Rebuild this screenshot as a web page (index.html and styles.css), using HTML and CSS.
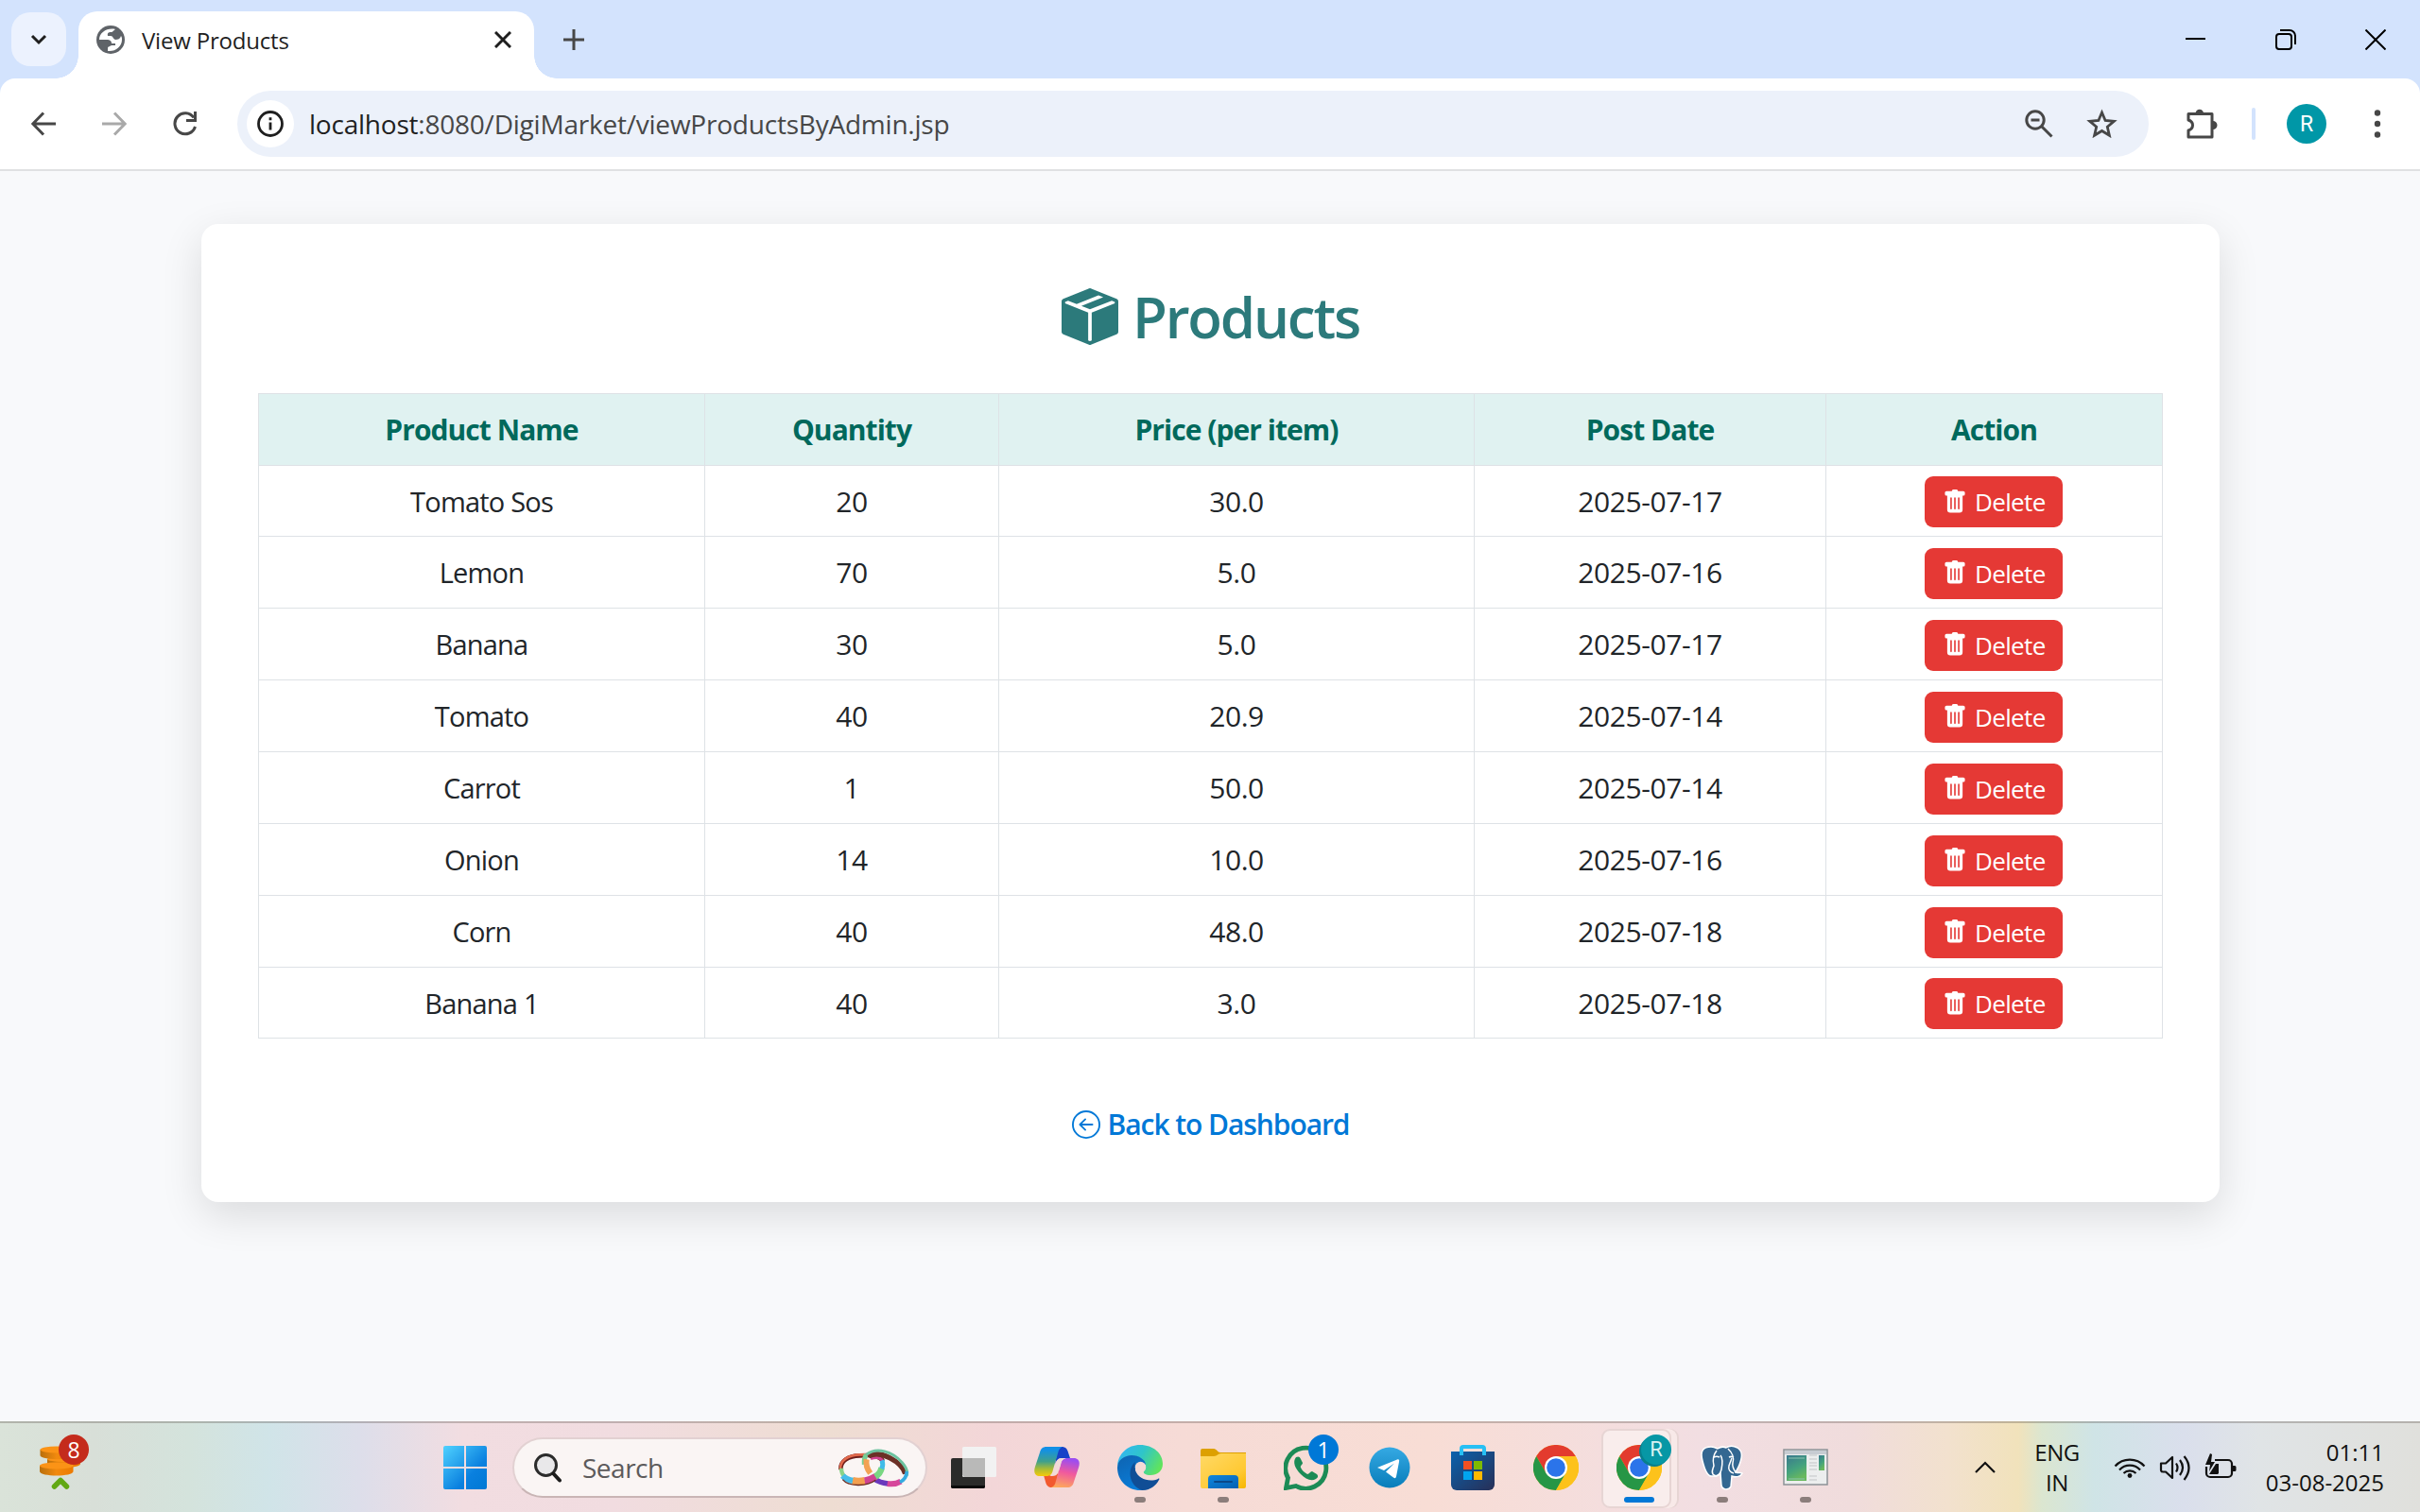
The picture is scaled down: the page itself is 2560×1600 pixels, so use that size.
FILE: index.html
```html
<!DOCTYPE html>
<html lang="en">
<head>
<meta charset="utf-8">
<title>View Products</title>
<link rel="stylesheet" href="styles.css">
</head>
<body>
<svg class="sprite" aria-hidden="true">
  <symbol id="trash" viewBox="0 0 16 16"><path d="M2.500 1a1 1 0 0 0-1 1v1a1 1 0 0 0 1 1H3v9a2 2 0 0 0 2 2h6a2 2 0 0 0 2-2V4h.5a1 1 0 0 0 1-1V2a1 1 0 0 0-1-1H10a1 1 0 0 0-1-1H7a1 1 0 0 0-1 1zm3 4a.5.5 0 0 1 .5.5v7a.5.5 0 0 1-1 0v-7a.5.5 0 0 1 .5-.5M8 5a.5.5 0 0 1 .5.5v7a.5.5 0 0 1-1 0v-7A.5.5 0 0 1 8 5m3 .5v7a.5.5 0 0 1-1 0v-7a.5.5 0 0 1 1 0"/></symbol>
  <symbol id="chrome" viewBox="0 0 48 48">
    <circle cx="24" cy="24" r="24" fill="#fdc21b"/>
    <path d="M3.200 12A24 24 0 0 1 44.800 12H24L13.600 30z" fill="#e33b2e"/>
    <path d="M3.200 12A24 24 0 0 0 24 48L34.400 30 24 36 13.600 30z" fill="#269646"/>
    <path d="M44.800 12A24 24 0 0 1 24 48L34.400 30 36 24 24 12z" fill="#fdc21b"/>
    <circle cx="24" cy="24" r="12" fill="#fff"/><circle cx="24" cy="24" r="9.800" fill="#2b74ea"/>
  </symbol>
</svg>

<header class="tabstrip">
  <div class="tab-search"><svg width="18" height="12" viewBox="0 0 18 12"><path d="M2 2l7 7 7-7" fill="none" stroke="#1f1f1f" stroke-width="3"/></svg></div>
  <div class="tab">
    <svg class="favicon" width="30" height="30" viewBox="0 0 30 30"><circle cx="15" cy="15" r="15" fill="#5f6368"/><path d="M20 4C12 2 3 7 3 15h8c3 0 5 1 5 4h4v2h-4c-1 1-4 1-4 3v3c8 1 15-5 15-12 0-1 0-3-1-4-1 3-3 4-6 4-3-1-2-4-5-4h-3c-1-4 2-4 4-4 1 0 2-2 4-3z" fill="#fff"/></svg>
    <span class="tab-title">View Products</span>
    <svg width="18" height="18" viewBox="0 0 18 18"><path d="M1 1l16 16M17 1L1 17" stroke="#1f1f1f" stroke-width="3"/></svg>
  </div>
  <svg class="new-tab" width="22" height="22" viewBox="0 0 22 22"><path d="M11 0v22M0 11h22" stroke="#474747" stroke-width="3"/></svg>
  <div class="window-buttons">
    <svg width="22" height="22" viewBox="0 0 22 22"><path d="M0 10h21" stroke="#000" stroke-width="2"/></svg>
    <svg width="22" height="22" viewBox="0 0 22 22" fill="none" stroke="#000" stroke-width="2"><rect x="1" y="5" width="16" height="16" rx="3"/><path d="M5 1h10a6 6 0 0 1 6 6v9"/></svg>
    <svg width="22" height="22" viewBox="0 0 22 22"><path d="M.5.5l21 21M21.500.5l-21 21" stroke="#000" stroke-width="2"/></svg>
  </div>
</header>

<nav class="toolbar">
  <svg class="nav-back" width="26" height="26" viewBox="0 0 26 26" fill="none" stroke="#474747" stroke-width="3"><path d="M26 13H2M13 1.500L1.800 13 13 24.500"/></svg>
  <svg class="nav-forward" width="26" height="26" viewBox="0 0 26 26" fill="none" stroke="#a9a9a9" stroke-width="3"><path d="M0 13h24M13 1.500L24.200 13 13 24.500"/></svg>
  <svg class="nav-reload" width="26" height="26" viewBox="0 0 26 26" fill="none" stroke="#474747" stroke-width="3"><path d="M22 6.500A11 11 0 1 0 23.500 16M23.500 0v9.500H14"/></svg>
  <div class="omnibox">
    <div class="site-info"><svg width="28" height="28" viewBox="0 0 28 28"><circle cx="14" cy="14" r="12.500" fill="none" stroke="#1f1f1f" stroke-width="2.800"/><path d="M14 12.500v8M14 7.300v2.900" stroke="#1f1f1f" stroke-width="2.800"/></svg></div>
    <span class="url"><span class="host">localhost</span>:8080/DigiMarket/viewProductsByAdmin.jsp</span>
    <svg class="zoom-icon" width="30" height="30" viewBox="0 0 30 30" fill="none" stroke="#474747" stroke-width="3"><circle cx="11" cy="11" r="9.200"/><path d="M17.500 17.500L28.500 28.500M6.500 11h9"/></svg>
    <svg class="star-icon" width="33" height="31" viewBox="0 0 33 31"><path d="M16.500 4l3.600 8.500 9.200.8-7 6 2.100 9-7.900-4.800-7.900 4.800 2.100-9-7-6 9.200-.8z" fill="none" stroke="#474747" stroke-width="2.800"/></svg>
  </div>
  <svg class="extensions" width="36" height="34" viewBox="0 0 36 34"><path d="M3 6.500h25v24.500H3V24c6-2 6-9 0-11z" fill="none" stroke="#474747" stroke-width="3" stroke-linejoin="round"/><path d="M10.500 6a4.300 4.300 0 0 1 8.600 0zM29 14a4.500 4.500 0 0 1 0 9z" fill="#474747"/></svg>
  <div class="divider"></div>
  <div class="avatar">R</div>
  <svg class="menu-dots" width="8" height="32" viewBox="0 0 8 32" fill="#474747"><circle cx="4" cy="4.500" r="3.200"/><circle cx="4" cy="16" r="3.200"/><circle cx="4" cy="27.500" r="3.200"/></svg>
</nav>

<main class="page">
  <section class="card">
    <h1 class="heading">
      <svg width="60" height="60" viewBox="0 0 16 16" fill="currentColor"><path d="M15.528 2.973a.75.75 0 0 1 .472.696v8.662a.75.75 0 0 1-.472.696l-7.250 2.900a.75.75 0 0 1-.557 0l-7.250-2.900A.75.75 0 0 1 0 12.331V3.669a.75.75 0 0 1 .471-.696L7.443.184l.01-.003.268-.108a.75.75 0 0 1 .558 0l.269.108.01.003zM10.404 2 4.250 4.461 1.846 3.500 1 3.839v.4l6.500 2.600v7.922l.5.2.5-.2V6.840l6.500-2.600v-.4l-.846-.339L8 5.961 5.596 5l6.154-2.461z"/></svg>
      <span>Products</span>
    </h1>
    <table class="products">
      <colgroup><col class="c-name"><col class="c-qty"><col class="c-price"><col class="c-date"><col class="c-action"></colgroup>
      <thead><tr><th>Product Name</th><th>Quantity</th><th>Price (per item)</th><th>Post Date</th><th>Action</th></tr></thead>
      <tbody>
        <tr class="short"><td>Tomato Sos</td><td class="num">20</td><td class="num">30.0</td><td class="num">2025-07-17</td><td><button class="delete"><svg><use href="#trash"/></svg><span>Delete</span></button></td></tr>
        <tr><td>Lemon</td><td class="num">70</td><td class="num">5.0</td><td class="num">2025-07-16</td><td><button class="delete"><svg><use href="#trash"/></svg><span>Delete</span></button></td></tr>
        <tr><td>Banana</td><td class="num">30</td><td class="num">5.0</td><td class="num">2025-07-17</td><td><button class="delete"><svg><use href="#trash"/></svg><span>Delete</span></button></td></tr>
        <tr><td>Tomato</td><td class="num">40</td><td class="num">20.9</td><td class="num">2025-07-14</td><td><button class="delete"><svg><use href="#trash"/></svg><span>Delete</span></button></td></tr>
        <tr><td>Carrot</td><td class="num">1</td><td class="num">50.0</td><td class="num">2025-07-14</td><td><button class="delete"><svg><use href="#trash"/></svg><span>Delete</span></button></td></tr>
        <tr><td>Onion</td><td class="num">14</td><td class="num">10.0</td><td class="num">2025-07-16</td><td><button class="delete"><svg><use href="#trash"/></svg><span>Delete</span></button></td></tr>
        <tr><td>Corn</td><td class="num">40</td><td class="num">48.0</td><td class="num">2025-07-18</td><td><button class="delete"><svg><use href="#trash"/></svg><span>Delete</span></button></td></tr>
        <tr class="short"><td>Banana 1</td><td class="num">40</td><td class="num">3.0</td><td class="num">2025-07-18</td><td><button class="delete"><svg><use href="#trash"/></svg><span>Delete</span></button></td></tr>
      </tbody>
    </table>
    <a class="back">
      <svg width="30" height="30" viewBox="0 0 16 16" fill="currentColor"><path fill-rule="evenodd" d="M1 8a7 7 0 1 0 14 0A7 7 0 0 0 1 8m15 0A8 8 0 1 1 0 8a8 8 0 0 1 16 0m-4.500-.5a.5.5 0 0 1 0 1H5.707l2.147 2.146a.5.5 0 0 1-.708.708l-3-3a.5.5 0 0 1 0-.708l3-3a.5.5 0 1 1 .708.708L5.707 7.500z"/></svg>
      <span>Back to Dashboard</span>
    </a>
  </section>
</main>

<footer class="taskbar">
  <div class="widget">
    <svg width="48" height="48" viewBox="0 0 48 48">
      <defs><linearGradient id="coin"><stop offset="0" stop-color="#b96f0c"/><stop offset=".5" stop-color="#f28a0e"/><stop offset="1" stop-color="#ec7a00"/></linearGradient></defs>
      <path d="M8 15v5c0 5.500 35 5.500 35 0v-5z" fill="url(#coin)"/><ellipse cx="25.500" cy="15" rx="17.500" ry="3" fill="#fb9316"/>
      <path d="M.5 5v6c0 5.500 35 5.500 35 0V5z" fill="url(#coin)"/><ellipse cx="18" cy="5" rx="17.500" ry="3.500" fill="#fb9316"/>
      <path d="M0 22v6c0 6 35.500 6 35.500 0v-6z" fill="url(#coin)"/><ellipse cx="17.800" cy="22" rx="17.800" ry="3.500" fill="#fb9316"/>
      <path d="M15.500 44l6.500-6.500 6.500 6.500" fill="none" stroke="#61a814" stroke-width="5.500" stroke-linecap="round" stroke-linejoin="round"/>
    </svg>
    <span class="badge badge-red">8</span>
  </div>
  <svg class="start" width="46" height="46" viewBox="0 0 46 46"><defs><linearGradient id="win" x1="0" y1="0" x2="46" y2="46" gradientUnits="userSpaceOnUse"><stop offset="0" stop-color="#50d2ff"/><stop offset=".65" stop-color="#0a80df"/><stop offset="1" stop-color="#0078d4"/></linearGradient></defs><path fill="url(#win)" d="M2 0h20v22H0V2a2 2 0 0 1 2-2zM24 0h20a2 2 0 0 1 2 2v20H24zM0 24h22v22H2a2 2 0 0 1-2-2zM24 24h22v20a2 2 0 0 1-2 2H24z"/></svg>
  <div class="search">
    <svg width="29" height="31" viewBox="0 0 29 31"><circle cx="12.500" cy="12.500" r="11" fill="#e9e8ea" stroke="#2b2b2b" stroke-width="3"/><path d="M20.500 21.500l6.500 7" stroke="#1c1c1c" stroke-width="4" stroke-linecap="round"/></svg>
    <span>Search</span>
    <svg class="rings" width="77" height="43" viewBox="50 45 231 129" fill="none">
      <path d="M60 114C58 88 85 70 120 70c30-2 62-4 74 18" stroke="#6e1f1c" stroke-width="14"/>
      <path d="M59 114C56 86 85 67 122 67h25" stroke="#e2694c" stroke-width="8"/>
      <path d="M155 80c18-6 34-4 38 8" stroke="#d04391" stroke-width="9"/>
      <path d="M148 72C185 50 255 90 265 128" stroke="#6b3026" stroke-width="16"/>
      <path d="M140 68C175 40 225 58 255 92 268 107 274 122 269 134" stroke="#6cc3a0" stroke-width="9"/>
      <path d="M167 144q16 12 43 15" stroke="#6a38bd" stroke-width="17"/>
      <path d="M208 159q24 4 43-7" stroke="#d6479b" stroke-width="18"/>
      <path d="M248 154q20-8 22-34" stroke="#35abe0" stroke-width="11"/>
      <path d="M141 68q-8 10-6 30" stroke="#76cf95" stroke-width="15"/>
      <path d="M142 82q-4 24 12 44" stroke="#f3a253" stroke-width="18"/>
      <path d="M62 110q0 18 12 28" stroke="#8bd389" stroke-width="13"/>
      <path d="M66 134q12 13 34 16" stroke="#46bdea" stroke-width="19"/>
      <path d="M98 150q18 4 39 0" stroke="#f4a04f" stroke-width="24"/>
      <path d="M136 150q18-3 36-14" stroke="#d04391" stroke-width="22"/>
      <path d="M170 137q16-10 20-28" stroke="#79d783" stroke-width="20"/>
      <path d="M190 112q6-14 1-27" stroke="#40bbe8" stroke-width="15"/>
      <path d="M66 146c18 22 75 24 105 2" stroke="#6b2c22" stroke-width="4"/>
    </svg>
  </div>
  <div class="apps">
    <div class="app"><svg width="48" height="48" viewBox="0 0 48 48"><rect y="14" width="36" height="32" rx="2" fill="#2b2b2a"/><path d="M0 43h36v1a2 2 0 0 1-2 2H2a2 2 0 0 1-2-2z" fill="#0a0a0a"/><rect x="12" y="2" width="36" height="32" rx="1.500" fill="#f2f2f2"/><path d="M12 14h24v20H14l-2-2z" fill="#b9b9b8"/></svg></div>
    <div class="app"><svg width="48" height="48" viewBox="0 0 48 48">
      <defs><linearGradient id="cpA" x1="0" y1="0" x2="0" y2="1"><stop offset=".1" stop-color="#1290e6"/><stop offset=".5" stop-color="#3fa08c"/><stop offset=".75" stop-color="#a8bb35"/><stop offset="1" stop-color="#f6ca0a"/></linearGradient><linearGradient id="cpB" x1=".4" y1="0" x2=".2" y2="1"><stop offset="0" stop-color="#9c4df0"/><stop offset=".45" stop-color="#f0599e"/><stop offset="1" stop-color="#feac58"/></linearGradient></defs>
      <path d="M25 2h4c4 0 6 2 7 6l2 6h-9c-4 0-6 3-7 7z" fill="#1642c8"/><path d="M23 45h-4c-4 0-6-2-7-6l-2-7h9c4 0 6-3 7-7z" fill="#f2592e"/>
      <path d="M13 2h17c-3 1-4 3-5 7l-5 17c-1 5-3 7-7 7H6c-5 0-7-4-5-10l5-15c1-4 3-6 7-6z" fill="url(#cpA)"/>
      <path d="M35 45H18c3-1 4-3 5-7l5-17c1-5 3-7 7-7h7c5 0 7 4 5 10l-5 15c-1 4-3 6-7 6z" fill="url(#cpB)"/>
      <path d="M29 14h6c-4 0-6 2-7 7l-3 9c-1 2-3 3-6 3h-3c3-1 4-4 5-7l2-7c1-3 3-5 6-5z" fill="#f2dad8"/>
    </svg></div>
    <div class="app running"><svg width="48" height="48" viewBox="0 0 48 48">
      <defs><linearGradient id="edA" x1="0" y1=".2" x2="1" y2=".6"><stop offset="0" stop-color="#33b5f4"/><stop offset=".5" stop-color="#2fc5c9"/><stop offset="1" stop-color="#61e45c"/></linearGradient><linearGradient id="edB" x1="0" y1="0" x2=".6" y2="1"><stop offset="0" stop-color="#0f63b0"/><stop offset="1" stop-color="#087fdc"/></linearGradient></defs>
      <path d="M0 22C1 9 11 0 24 0c14 0 24 9 24 20 0 8-6 12-13 12-5 0-8-2-7-4 2-2 2-4 2-5C29 12 5 8 0 22z" fill="url(#edA)"/>
      <path d="M0 24C0 16 8 11 15 11c8 0 15 5 15 10-9-5-15 7-8 15 4 6 12 8 20 3-4 6-10 9-18 9C11 48 0 38 0 24z" fill="url(#edB)"/>
      <path d="M19 18c-9 7-7 25 7 30 9 0 15-5 18-11 1-1 0-2-1-1-9 4-21 0-24-9-1-4-1-7 0-9z" fill="#104e96"/>
      <circle cx="24.500" cy="23.500" r="5.700" fill="#f5dad7"/>
    </svg></div>
    <div class="app running"><svg width="48" height="48" viewBox="0 0 48 48">
      <defs><linearGradient id="fold" x1="0" y1="0" x2="1" y2="1"><stop offset="0" stop-color="#ffd966"/><stop offset=".7" stop-color="#ffc933"/><stop offset="1" stop-color="#f6b600"/></linearGradient><linearGradient id="foldB" x1="0" y1="0" x2="1" y2="1"><stop offset="0" stop-color="#0f86df"/><stop offset="1" stop-color="#0660b0"/></linearGradient></defs>
      <path d="M0 6a2 2 0 0 1 2-2h12c3 0 4 4 7 4h27v10H0z" fill="#dda000"/><path d="M0 12h14c4 0 4-3 8-3h26v35a2 2 0 0 1-2 2H2a2 2 0 0 1-2-2z" fill="url(#fold)"/><path d="M8 46V36a4 4 0 0 1 4-4h24a4 4 0 0 1 4 4v10z" fill="url(#foldB)"/><path d="M15 39h18" stroke="#0c4888" stroke-width="2" stroke-linecap="round"/>
    </svg></div>
    <div class="app"><svg width="48" height="48" viewBox="0 0 48 48"><path d="M4.500 35A21.500 21.500 0 1 1 13 43.500L2.500 45.500z" fill="none" stroke="#1c8b56" stroke-width="4.800"/><path d="M13 13c2-1 4-1 5 2l2 4c0 2-3 3-2 5 1 3 4 5 7 7 2 0 3-3 5-3l5 3c2 2 1 4-1 5-5 3-11 0-16-5-6-6-9-13-5-18z" fill="#1c8b56"/></svg><span class="badge badge-blue">1</span></div>
    <div class="app"><svg width="48" height="48" viewBox="0 0 48 48"><defs><linearGradient id="tg" x1="0" y1="0" x2="0" y2="1"><stop offset="0" stop-color="#35a9e3"/><stop offset="1" stop-color="#087dba"/></linearGradient></defs><circle cx="24" cy="24" r="21.500" fill="url(#tg)"/><path d="M11 24L32 15.500c2-.5 2.500.5 2 2.500L31 33.500c-.5 2-1.500 2-3 1l-8-6 9-9-11 7.500z" fill="#fff"/></svg></div>
    <div class="app"><svg width="48" height="48" viewBox="0 0 48 48"><defs><linearGradient id="store" x1="0" y1="0" x2="1" y2="1"><stop offset="0" stop-color="#0a62ad"/><stop offset="1" stop-color="#282f56"/></linearGradient></defs><path d="M1 7h46v35a6 6 0 0 1-6 6H7a6 6 0 0 1-6-6z" fill="url(#store)"/><path d="M12 11V4a2 2 0 0 1 2-2h20a2 2 0 0 1 2 2v7" fill="none" stroke="#27c0f4" stroke-width="4"/><path d="M14 17h9v9h-9z" fill="#f25022"/><path d="M25 17h9v9h-9z" fill="#7fba00"/><path d="M14 28h9v9h-9z" fill="#00a4ef"/><path d="M25 28h9v9h-9z" fill="#ffb900"/></svg></div>
    <div class="app"><svg width="48" height="48"><use href="#chrome"/></svg></div>
    <div class="app active"><svg width="48" height="48"><use href="#chrome"/></svg><span class="badge badge-teal">R</span></div>
    <div class="app running"><svg width="48" height="48" viewBox="0 0 48 48"><path d="M3 17C0 6 4 2 12 2c3 0 5 1 7 2 3-2 7-2 9-1 3-2 8-2 12 0 6 4 5 10 2 18-1 3-3 6-4 8 3 1 6 0 7 1-1 3-6 5-11 3l-1 11c-2 4-9 4-10-1l-1-13c-3 4-7 3-9 3-5 1-8-8-10-16z" fill="#336791" stroke="#fff" stroke-width="1.500"/><path d="M18 6c-4 5-4 12-3 16-1 4-3 6-1 9 4 4 8 0 9-5 1-5 2-11-1-15M30 4c5 5 7 9 5 15-1 4 1 7 3 10M15 13c2-1 4-1 6 0M31 13c2-1 3-1 5 0M34 14l-3 8c-1 4 1 7 5 8" fill="none" stroke="#fff" stroke-width="1.500"/></svg></div>
    <div class="app running"><svg width="48" height="48" viewBox="0 0 48 48"><defs><linearGradient id="prog" x1="0" y1="0" x2=".4" y2="1"><stop offset="0" stop-color="#39778e"/><stop offset=".6" stop-color="#44a27e"/><stop offset="1" stop-color="#69b85e"/></linearGradient></defs><rect x="1" y="5" width="46" height="37" fill="#eceeee" stroke="#8c9297" stroke-width="1.500"/><path d="M2 6h44v4H2z" fill="#c7ccd2"/><rect x="4" y="11" width="21" height="27" fill="url(#prog)"/><path d="M6 14h17M6 36h17" stroke="#8cc5b1"/><path d="M28 11h8M28 15h8M28 19h8M28 22h8M28 26h8M28 33h8M28 37h8" stroke="#c2c5c7"/><rect x="38" y="11" width="6" height="16" fill="url(#prog)"/></svg></div>
  </div>
  <div class="tray">
    <svg class="tray-up" width="24" height="14" viewBox="0 0 24 14"><path d="M2 12L12 2l10 10" fill="none" stroke="#111" stroke-width="2.200"/></svg>
    <div class="lang"><span>ENG</span><span>IN</span></div>
    <svg class="wifi" width="34" height="24" viewBox="0 0 34 24" fill="none" stroke="#111" stroke-width="2.200"><path d="M1.500 10.500a21 21 0 0 1 31 0M6 14.500a15 15 0 0 1 22 0M10.500 18a9.500 9.500 0 0 1 13 0"/><circle cx="17" cy="20.500" r="2.400" fill="#111" stroke="none"/></svg>
    <svg class="sound" width="34" height="28" viewBox="0 0 34 28" fill="none" stroke="#111" stroke-width="2.200"><path d="M2 9.500h5L14 3v22l-7-6.500H4a2 2 0 0 1-2-2z" stroke-linejoin="round"/><path d="M18 9.500q3 4.500 0 9M22 6q6 8 0 16M26.500 2q10 12 0 25"/></svg>
    <svg class="battery" width="34" height="28" viewBox="0 0 34 28"><path d="M11 8h14a4 4 0 0 1 4 4v10a4 4 0 0 1-4 4H6a4 4 0 0 1-4-4v-7" fill="none" stroke="#111" stroke-width="2.200"/><path d="M30 14h2a1.500 1.500 0 0 1 1.500 1.500v3A1.500 1.500 0 0 1 32 20h-2zM6 1v0L1 13h5l-1 7 6-10H7l1-8zM5 23l7-11h3v10l-1 1z" fill="#111"/></svg>
    <div class="clock"><span class="time">01:11</span><span>03-08-2025</span></div>
  </div>
</footer>
</body>
</html>
```
FILE: styles.css
```css
* { box-sizing: border-box; }
body {
  margin: 0;
  width: 2560px;
  height: 1600px;
  overflow: hidden;
  display: flex;
  flex-direction: column;
  background: #f8f9fb;
  color: #212529;
  font-family: "Open Sans", "Noto Sans", sans-serif;
  font-size: 30px;
}
svg { display: block; flex: none; }
.sprite { position: absolute; width: 0; height: 0; }

/* Tab strip */
.tabstrip {
  height: 83px;
  flex: none;
  display: flex;
  align-items: center;
  padding: 0 36px 0 12px;
  background: #d3e3fd;
}
.tab-search {
  width: 58px;
  height: 57px;
  border-radius: 20px;
  background: #ecf2fe;
  display: grid;
  place-items: center;
}
.tab {
  position: relative;
  align-self: flex-end;
  width: 482px;
  height: 71px;
  margin-left: 13px;
  padding: 0 24px 12px 19px;
  border-radius: 20px 20px 0 0;
  background: #fff;
  display: flex;
  align-items: center;
}
.tab::before, .tab::after {
  content: "";
  position: absolute;
  bottom: 0;
  width: 24px;
  height: 24px;
}
.tab::before { left: -24px; background: radial-gradient(circle at 0 0, transparent 23.5px, #fff 24px); }
.tab::after { right: -24px; background: radial-gradient(circle at 100% 0, transparent 23.5px, #fff 24px); }
.tab-title {
  flex: 1;
  margin-left: 18px;
  padding-top: 2px;
  font-size: 24px;
  letter-spacing: -0.2px;
  color: #1f1f1f;
}
.new-tab { margin-left: 31px; }
.window-buttons { margin-left: auto; display: flex; gap: 73px; }

/* Toolbar */
.toolbar {
  position: relative;
  height: 98px;
  flex: none;
  display: flex;
  align-items: center;
  padding: 0 41px 0 33px;
  background: linear-gradient(#fff, #fff) padding-box;
  border-bottom: 2px solid #e0e1e3;
  border-radius: 16px 16px 0 0;
}
.toolbar::before {
  content: "";
  position: absolute;
  inset: 0;
  z-index: -1;
  background: #d3e3fd;
  height: 20px;
}
.nav-forward { margin-left: 49px; }
.nav-reload { margin-left: 49px; }
.omnibox {
  width: 2022px;
  height: 70px;
  margin-left: 42px;
  padding: 0 33px 0 10px;
  border-radius: 35px;
  background: #ecf1fa;
  display: flex;
  align-items: center;
}
.site-info {
  width: 50px;
  height: 50px;
  border-radius: 50%;
  background: #fff;
  display: grid;
  place-items: center;
}
.url {
  flex: 1;
  margin-left: 16px;
  font-size: 28px;
  letter-spacing: -0.22px;
  color: #474747;
}
.host { color: #1f1f1f; }
.star-icon { margin-left: 35px; margin-top: -2px; }
.extensions { margin-left: 39px; }
.divider { width: 4px; height: 34px; margin-left: 34px; border-radius: 2px; background: #d3e3fd; }
.avatar {
  width: 42px;
  height: 42px;
  margin-left: 33px;
  border-radius: 50%;
  background: #0097a7;
  color: #fff;
  font: 23px/43px Roboto, sans-serif;
  text-align: center;
}
.menu-dots { margin-left: auto; }

/* Page */
.page { height: 1323px; flex: none; padding: 56px 212px 0 213px; }
.card {
  height: 1035px;
  padding: 62px 60px 0;
  border-radius: 18px;
  background: #fff;
  box-shadow: 0 14px 44px rgba(0, 0, 0, 0.12);
}
.heading {
  height: 72px;
  margin: 0 0 45px;
  display: flex;
  align-items: center;
  justify-content: center;
  gap: 15px;
  color: #2c7a7b;
  font-size: 60px;
  font-weight: 600;
  line-height: 72px;
  letter-spacing: -2.2px;
}
.products {
  width: 2015px;
  table-layout: fixed;
  border-collapse: separate;
  border-spacing: 0;
  border: solid #dee2e6;
  border-width: 1px 0 0 1px;
  text-align: center;
}
.c-name { width: 472px; }
.c-qty { width: 311px; }
.c-price { width: 503px; }
.c-date { width: 372px; }
.c-action { width: 356px; }
.products th, .products td {
  height: 76px;
  padding: 1px 0 0;
  border: solid #dee2e6;
  border-width: 0 1px 1px 0;
  line-height: 44px;
  vertical-align: middle;
}
.products th { background: #e0f2f1; color: #00695c; font-weight: 700; letter-spacing: -0.95px; }
.products td { font-size: 29px; letter-spacing: -0.8px; }
.products .num { font-size: 30px; letter-spacing: -0.4px; }
.products .short td { height: 75px; }
.delete {
  width: 146px;
  height: 54px;
  margin: 1px 0 0 104px;
  padding: 0 0 0 21px;
  border: 0;
  border-radius: 9px;
  background: #e53935;
  color: #fff;
  display: flex;
  align-items: center;
  font: 26px/36px "Open Sans", sans-serif;
  letter-spacing: -0.65px;
}
.delete svg { width: 26px; height: 26px; margin: -1px 8px 0 -2px; fill: currentColor; }
.back {
  margin-top: 68px;
  display: flex;
  align-items: center;
  justify-content: center;
  gap: 8px;
  height: 45px;
  color: #0078d7;
  font-weight: 600;
  line-height: 45px;
  letter-spacing: -1.07px;
}

/* Taskbar */
.taskbar {
  height: 96px;
  flex: none;
  display: flex;
  align-items: center;
  border-top: 2px solid rgba(90, 80, 75, 0.32);
  background: linear-gradient(90deg, #dae3d9 0, #d8dfd8 100px, #d4e3dc 200px, #d0e4e8 285px, #dddeea 380px, #f2dde1 490px, #f1dce0 650px, #eeddd2 880px, #f3d6d8 1050px, #f6dbd6 1250px, #f8ddd5 1510px, #f2dee2 1800px, #f0dcdc 1960px, #f2e1ce 2060px, #f1e2bb 2135px, #dbe6d0 2160px, #cfe4e6 2215px, #dadfec 2310px, #e0e4e6 2390px, #e0e0dc 2560px) border-box;
}
.widget { position: relative; width: 48px; margin-left: 42px; }
.badge {
  position: absolute;
  width: 32px;
  height: 32px;
  border-radius: 50%;
  color: #fff;
  font-size: 23px;
  line-height: 32px;
  text-align: center;
}
.badge-red { left: 20px; top: -11px; background: #c42b1c; }
.badge-blue { left: 46px; top: 12px; background: #0078d7; }
.badge-teal { left: 46px; top: 12px; background: #0797a5; color: #d9f1f2; font: 22px/32px Roboto, sans-serif; box-shadow: -2px 2px 0 #087f8c; }
.start { margin-left: 379px; }
.search {
  width: 439px;
  height: 64px;
  margin-left: 27px;
  padding: 0 16px 0 21px;
  border: 2px solid #e2d1d2;
  border-bottom-color: #c9b5b5;
  border-radius: 32px;
  background: #faf5f4;
  display: flex;
  align-items: center;
}
.search span { flex: 1; margin-left: 22px; font-size: 28px; letter-spacing: -0.5px; color: #5c5a5b; }
.apps { display: flex; margin-left: 5px; }
.app {
  position: relative;
  width: 88px;
  height: 94px;
  display: grid;
  place-items: center;
}
.app svg { position: relative; }
.app.running::after, .app.active::after {
  content: "";
  position: absolute;
  left: 38px;
  bottom: 10px;
  width: 12px;
  height: 6px;
  border-radius: 3px;
  background: #8b7d7b;
}
.app.active::after { left: 28px; width: 32px; background: #0078d7; }
.app.active::before {
  content: "";
  position: absolute;
  left: 4px;
  top: 6px;
  width: 70px;
  height: 80px;
  border: 2px solid #e7d5d4;
  border-radius: 9px;
  background: #f9edec;
  box-shadow: 6px 0 0 0 #f8e9e8, 8px 0 0 0 #e7d5d4;
}
.app .badge { z-index: 1; }
.tray { flex: 1; display: flex; align-items: center; color: #111; font-size: 24px; }
.tray-up { margin-left: 134px; }
.lang { width: 60px; margin-left: 34px; text-align: center; }
.lang, .clock { display: flex; flex-direction: column; line-height: 32px; letter-spacing: -0.5px; }
.wifi { margin-left: 30px; }
.sound { margin-left: 14px; }
.battery { margin-left: 14px; margin-top: -4px; }
.clock { margin-left: auto; margin-right: 38px; text-align: right; letter-spacing: 0; }
```
